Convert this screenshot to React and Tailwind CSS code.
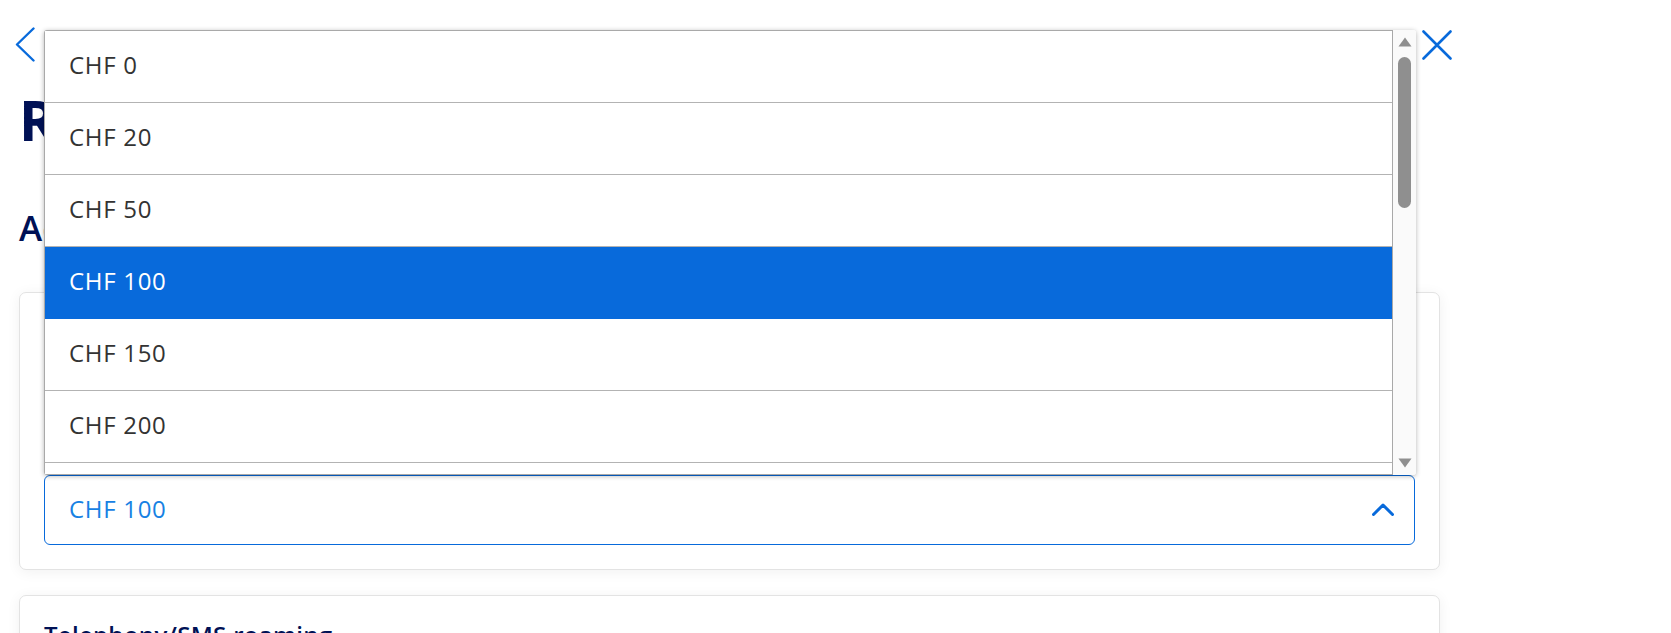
import React from "react";

const options = ["CHF 0", "CHF 20", "CHF 50", "CHF 100", "CHF 150", "CHF 200", ""];

export default function App() {
  return (
    <div className="relative w-full h-[633px] overflow-hidden bg-white font-['Open_Sans',sans-serif]">
      {/* Header row */}
      <div className="flex w-[1452px] justify-between pl-[15px] pt-[27px]">
        <svg width="20" height="35" viewBox="0 0 20 35" fill="none">
          <path d="M18.5 1.5 L2 17.5 L18.5 33.5" stroke="#086adb" strokeWidth="2.4" strokeLinecap="round" strokeLinejoin="round" />
        </svg>
        <svg width="30" height="30" viewBox="0 0 30 30" fill="none" className="mt-[3px]">
          <path d="M1.5 1.5 L28.5 28.5 M28.5 1.5 L1.5 28.5" stroke="#086adb" strokeWidth="2.6" strokeLinecap="round" />
        </svg>
      </div>

      <div className="pl-[19px] w-[1440px]">
        <h1 className="mt-[24px] text-[56px] leading-[67px] font-bold text-[#001155]">Roaming</h1>
        <h2 className="mt-[54px] text-[35px] leading-[42px] font-semibold text-[#001155]">Account cost limit</h2>

        {/* Card 1 */}
        <div className="mt-[43px] rounded-[7px] border border-[#e3e3e3] bg-white px-[24px] pb-[24px] shadow-[0_2px_14px_rgba(0,0,0,0.06)]">
          <div className="h-[182px]" />
          <div className="flex h-[70px] items-center justify-between rounded-[6px] border border-[#086adb] pb-[2px] pl-[24px] pr-[20px]">
            <span className="text-[24px] tracking-[0.7px] text-[#1781e3]">CHF 100</span>
            <svg width="22" height="13" viewBox="0 0 22 13" fill="none">
              <path d="M1.5 11.5 L11 2 L20.5 11.5" stroke="#086adb" strokeWidth="3" strokeLinecap="round" strokeLinejoin="round" />
            </svg>
          </div>
        </div>

        {/* Card 2 */}
        <div className="mt-[25px] rounded-[7px] border border-[#e3e3e3] bg-white px-[24px] pt-[23px] pb-[24px] shadow-[0_2px_14px_rgba(0,0,0,0.06)]">
          <p className="text-[24px] leading-[32px] font-semibold tracking-[0.3px] text-[#001155]">Telephony/SMS roaming</p>
        </div>
      </div>

      {/* Native-like dropdown popup */}
      <div className="absolute left-[44px] top-[30px] flex h-[445px] w-[1372px] overflow-hidden rounded-[3px] bg-white shadow-[0_1px_5px_rgba(0,0,0,0.3)]">
        <div className="flex-1 overflow-hidden border border-[#a9a9a9]">
          {options.map((o, i) => {
            const sel = o === "CHF 100";
            return (
              <div
                key={i}
                className={
                  sel
                    ? "flex h-[72px] items-center bg-[#086adb] pb-[4px] pl-[24px] text-[24px] tracking-[0.7px] text-white"
                    : "flex h-[72px] items-center border-b border-[#b3b3b3] pb-[4px] pl-[24px] text-[24px] tracking-[0.7px] text-[#333333]"
                }
              >
                {o}
              </div>
            );
          })}
        </div>
        <div className="flex w-[23px] flex-col items-center bg-[#fafafa] pt-[7px] pb-[7px]">
          <svg width="14" height="10" viewBox="0 0 14 10">
            <path d="M7 0.5 L13.5 9.5 L0.5 9.5 Z" fill="#8f8f8f" />
          </svg>
          <div className="mt-[10px] h-[151px] w-[13px] rounded-full bg-[#8f8f8f]" />
          <div className="flex-1" />
          <svg width="14" height="10" viewBox="0 0 14 10">
            <path d="M0.5 0.5 L13.5 0.5 L7 9.5 Z" fill="#8f8f8f" />
          </svg>
        </div>
      </div>
    </div>
  );
}
